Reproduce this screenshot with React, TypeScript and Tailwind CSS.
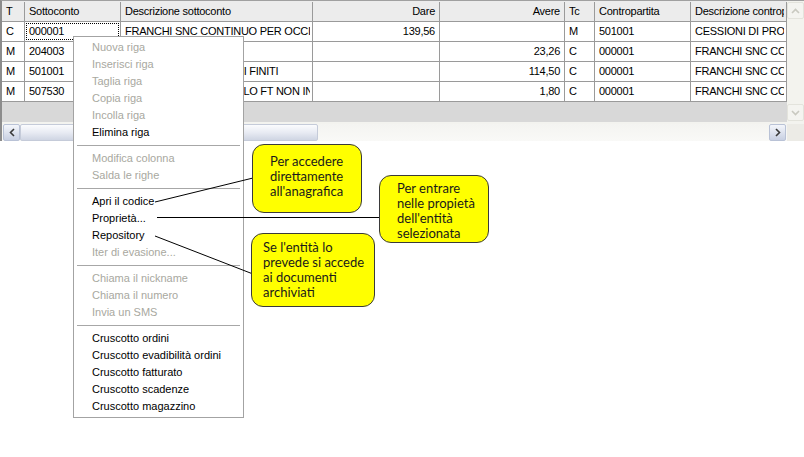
import React from "react";

const cols = [
  { label: "T", w: 23, align: "left" },
  { label: "Sottoconto", w: 96, align: "left" },
  { label: "Descrizione sottoconto", w: 192, align: "left" },
  { label: "Dare", w: 127, align: "right" },
  { label: "Avere", w: 125, align: "right" },
  { label: "Tc", w: 30, align: "left" },
  { label: "Contropartita", w: 96, align: "left" },
  { label: "Descrizione contropartita", w: 96, align: "left" },
];

const rows = [
  ["C", "000001", "FRANCHI SNC CONTINUO PER OCCI", "139,56", "", "M", "501001", "CESSIONI DI PRODOTTI"],
  ["M", "204003", "", "", "23,26", "C", "000001", "FRANCHI SNC CONTINUO"],
  ["M", "501001", "CESSIONI DI PRODOTTI FINITI", "", "114,50", "C", "000001", "FRANCHI SNC CONTINUO"],
  ["M", "507530", "ARROTOND. CONTROLLO FT NON INCASSATE", "", "1,80", "C", "000001", "FRANCHI SNC CONTINUO"],
];

type Item = { t: string; on?: boolean } | "sep";
const menu: Item[] = [
  { t: "Nuova riga" },
  { t: "Inserisci riga" },
  { t: "Taglia riga" },
  { t: "Copia riga" },
  { t: "Incolla riga" },
  { t: "Elimina riga", on: true },
  "sep",
  { t: "Modifica colonna" },
  { t: "Salda le righe" },
  "sep",
  { t: "Apri il codice", on: true },
  { t: "Proprietà...", on: true },
  { t: "Repository", on: true },
  { t: "Iter di evasione..." },
  "sep",
  { t: "Chiama il nickname" },
  { t: "Chiama il numero" },
  { t: "Invia un SMS" },
  "sep",
  { t: "Cruscotto ordini", on: true },
  { t: "Cruscotto evadibilità ordini", on: true },
  { t: "Cruscotto fatturato", on: true },
  { t: "Cruscotto scadenze", on: true },
  { t: "Cruscotto magazzino", on: true },
];

function Cell({ w, align, children, header, focus }: { w: number; align: string; children?: React.ReactNode; header?: boolean; focus?: boolean }) {
  return (
    <div
      style={{ width: w }}
      className={`shrink-0 h-full border-r border-[#9a9a9a] flex items-center overflow-hidden whitespace-nowrap px-[1px] ${header ? "bg-[#ececec]" : "bg-white"} ${align === "right" ? "justify-end" : "justify-start"}`}
    >
      <div className={`h-[17px] w-full flex items-center px-[2px] overflow-hidden ${align === "right" ? "justify-end" : "justify-start"} ${focus ? "border border-dotted border-black" : "border border-transparent"}`}>
        {children}
      </div>
    </div>
  );
}

export default function App() {
  return (
    <div
      className="relative w-[804px] h-[457px] bg-white overflow-hidden text-[11px] text-black"
      style={{ fontFamily: "'Liberation Sans', Arial, sans-serif" }}
    >
      {/* Grid area */}
      <div className="flex flex-col w-[804px] h-[141px] border-t border-[#a0a0a0] border-l-2 border-l-[#8c8c8c]">
        <div className="flex h-[121px]">
          <div className="flex flex-col w-[785px] bg-[#d8d8d8] tracking-[-0.25px]">
            <div className="flex h-[21px] border-b border-[#9a9a9a] pt-[1px] bg-[#ececec]">
              {cols.map((c, i) => (
                <Cell key={i} w={c.w} align={c.align} header>
                  {c.label}
                </Cell>
              ))}
            </div>
            {rows.map((r, ri) => (
              <div key={ri} className="flex h-[20px] border-b border-[#9a9a9a]">
                {r.map((v, ci) => (
                  <Cell key={ci} w={cols[ci].w} align={cols[ci].align} focus={ri === 0 && ci === 1}>
                    {v}
                  </Cell>
                ))}
              </div>
            ))}
          </div>
          {/* vertical scrollbar */}
          <div className="w-[17px] flex flex-col justify-between bg-[#f3f3ee] pt-[1px] pb-[1px]">
            <div className="h-[17px] w-[17px] flex items-center justify-center bg-[#f4f4f0] border border-[#e3e3dc] rounded-[2px]">
              <svg width="9" height="6" viewBox="0 0 9 6"><path d="M1 5 L4.5 1.5 L8 5" stroke="#c9c9c0" strokeWidth="1.6" fill="none" /></svg>
            </div>
            <div className="h-[17px] w-[17px] flex items-center justify-center bg-[#f4f4f0] border border-[#e3e3dc] rounded-[2px]">
              <svg width="9" height="6" viewBox="0 0 9 6"><path d="M1 1 L4.5 4.5 L8 1" stroke="#c9c9c0" strokeWidth="1.6" fill="none" /></svg>
            </div>
          </div>
        </div>
        {/* horizontal scrollbar */}
        <div className="flex h-[19px] items-center bg-[#f3f3ef] pt-[1px]">
          <div className="flex w-[785px] h-[17px] bg-gradient-to-b from-[#f4f4f1] to-[#f9f9f7]">
            <div className="w-[17px] h-[17px] ml-[1px] flex items-center justify-center rounded-[2px] border border-[#b9c2d6] bg-gradient-to-b from-[#f4f6fb] to-[#c8d0e2]">
              <svg width="6" height="9" viewBox="0 0 6 9"><path d="M5 1 L1.5 4.5 L5 8" stroke="#3a3a3a" strokeWidth="1.6" fill="none" /></svg>
            </div>
            <div className="w-[298px] h-[17px] rounded-[2px] border border-[#c5cbd9] bg-gradient-to-b from-[#fbfcfe] via-[#e8ebf3] to-[#cfd5e3]" />
            <div className="flex-1" />
            <div className="w-[17px] h-[17px] mr-[1px] flex items-center justify-center rounded-[2px] border border-[#b9c2d6] bg-gradient-to-b from-[#f4f6fb] to-[#c8d0e2]">
              <svg width="6" height="9" viewBox="0 0 6 9"><path d="M1 1 L4.5 4.5 L1 8" stroke="#3a3a3a" strokeWidth="1.6" fill="none" /></svg>
            </div>
          </div>
          <div className="w-[17px] h-[17px] bg-[#ecebe6]" />
        </div>
      </div>

      {/* Context menu */}
      <div className="absolute left-[73px] top-[36px] w-[171px] bg-white border border-[#a3a3a3] py-[2px]">
        {menu.map((m, i) =>
          m === "sep" ? (
            <div key={i} className="h-[9px] flex items-center px-[3px]">
              <div className="h-[1px] w-full bg-[#a7a7a7]" />
            </div>
          ) : (
            <div
              key={i}
              className={`h-[17px] flex items-center pl-[18px] whitespace-nowrap ${m.on ? "text-black" : "text-[#a8a8a0]"}`}
            >
              {m.t}
            </div>
          )
        )}
      </div>

      {/* connector lines */}
      <svg className="absolute left-0 top-0" width="804" height="457">
        <line x1="155" y1="202" x2="253" y2="178" stroke="#000" strokeWidth="1" />
        <line x1="157" y1="217.5" x2="380" y2="217.5" stroke="#000" strokeWidth="1" />
        <line x1="155" y1="236" x2="253" y2="274" stroke="#000" strokeWidth="1" />
      </svg>

      {/* Callouts */}
      <div
        className="absolute left-[252px] top-[144px] w-[110px] h-[69px] bg-[#ffff00] border border-[#3a3a3a] rounded-[12px] pl-[17px] pt-[9px] text-[13px] leading-[15px] text-[#1a1a1a]"
        style={{ fontFamily: "Lato, 'Open Sans', sans-serif" }}
      >
        <div>Per accedere</div>
        <div>direttamente</div>
        <div>all'anagrafica</div>
      </div>
      <div
        className="absolute left-[379px] top-[175px] w-[110px] h-[68px] bg-[#ffff00] border border-[#3a3a3a] rounded-[12px] pl-[17px] pt-[5px] text-[13px] leading-[15px] text-[#1a1a1a]"
        style={{ fontFamily: "Lato, 'Open Sans', sans-serif" }}
      >
        <div>Per entrare</div>
        <div>nelle propietà</div>
        <div>dell'entità</div>
        <div>selezionata</div>
      </div>
      <div
        className="absolute left-[251px] top-[233px] w-[124px] h-[74px] bg-[#ffff00] border border-[#3a3a3a] rounded-[12px] pl-[11px] pt-[6px] text-[13px] leading-[15px] text-[#1a1a1a]"
        style={{ fontFamily: "Lato, 'Open Sans', sans-serif" }}
      >
        <div>Se l'entità lo</div>
        <div>prevede si accede</div>
        <div>ai documenti</div>
        <div>archiviati</div>
      </div>
    </div>
  );
}
